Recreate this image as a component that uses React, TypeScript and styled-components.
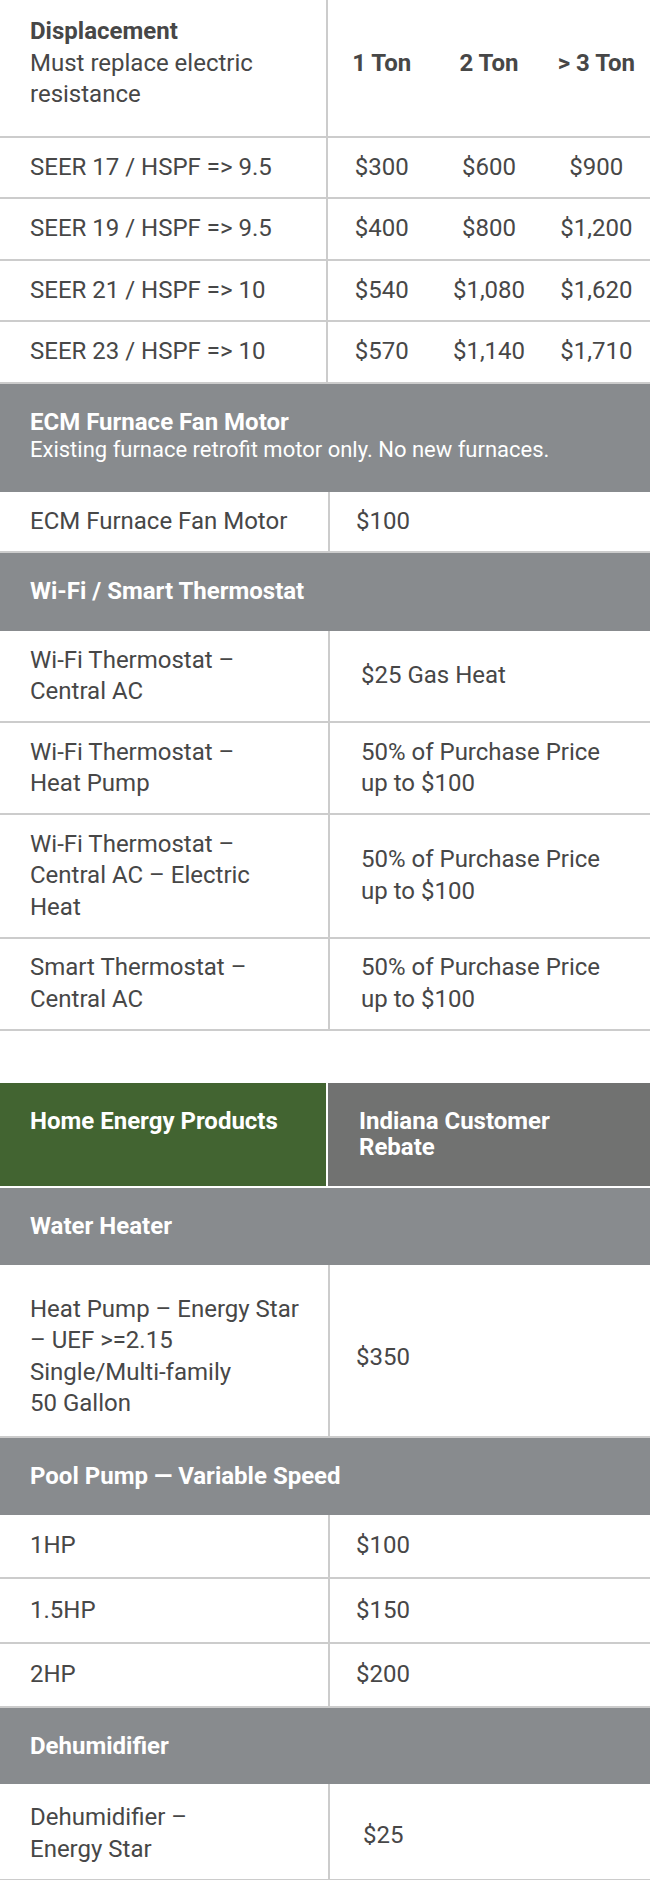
import styled, { createGlobalStyle } from "styled-components";

const GlobalStyle = createGlobalStyle`
  html, body {
    margin: 0;
    padding: 0;
    background: #ffffff;
  }
  body {
    font-family: Roboto, "Liberation Sans", Arial, sans-serif;
    color: #474747;
    -webkit-font-smoothing: antialiased;
  }
`;

const Page = styled.div`
  width: 650px;
  display: flex;
  flex-direction: column;
`;

const Table = styled.div<{ $top?: number }>`
  display: flex;
  flex-direction: column;
  margin-top: ${({ $top }) => $top ?? 0}px;
`;

const Row = styled.div<{ $cols: string }>`
  display: grid;
  grid-template-columns: ${({ $cols }) => $cols};
  border-bottom: 2px solid #cccccc;
`;

// a cell: first column carries the divider line
const Cell = styled.div<{
  $divider?: boolean;
  $center?: boolean;
  $bold?: boolean;
  $pt?: number;
  $pb?: number;
  $pl?: number;
}>`
  display: flex;
  flex-direction: column;
  justify-content: center;
  box-sizing: border-box;
  padding-top: ${({ $pt }) => $pt ?? 14}px;
  padding-bottom: ${({ $pb }) => $pb ?? 14}px;
  padding-left: ${({ $pl, $center }) => ($center ? 0 : $pl ?? 30)}px;
  padding-right: ${({ $center }) => ($center ? 0 : 12)}px;
  border-right: ${({ $divider }) => ($divider ? "2px solid #cccccc" : "none")};
  text-align: ${({ $center }) => ($center ? "center" : "left")};
  white-space: nowrap;
  font-size: 24px;
  line-height: 31.5px;
  font-weight: ${({ $bold }) => ($bold ? 700 : 400)};
`;

const Strong = styled.span`
  font-weight: 700;
`;

const Band = styled.div<{ $pb?: number }>`
  background: #888b8e;
  color: #ffffff;
  padding: 24px 30px ${({ $pb }) => $pb ?? 25}px;
  display: flex;
  flex-direction: column;
`;

const BandTitle = styled.div`
  font-size: 24px;
  line-height: 28px;
  font-weight: 700;
`;

const BandNote = styled.div`
  font-size: 22px;
  line-height: 28px;
  font-weight: 400;
`;

const HeadRow = styled.div`
  display: grid;
  grid-template-columns: 326px 1fr;
  column-gap: 2px;
  border-bottom: 2px solid #ffffff;
`;

const HeadCell = styled.div<{ $bg: string; $pl: number }>`
  background: ${({ $bg }) => $bg};
  color: #ffffff;
  font-size: 24px;
  line-height: 26px;
  font-weight: 700;
  padding: 25px 30px 26px ${({ $pl }) => $pl}px;
`;

const TOP_COLS = "328px 1fr 1fr 1fr";
const TWO_COLS = "330px 1fr";

const seer = [
  { label: "SEER 17 / HSPF => 9.5", v: ["$300", "$600", "$900"] },
  { label: "SEER 19 / HSPF => 9.5", v: ["$400", "$800", "$1,200"] },
  { label: "SEER 21 / HSPF => 10", v: ["$540", "$1,080", "$1,620"] },
  { label: "SEER 23 / HSPF => 10", v: ["$570", "$1,140", "$1,710"] },
];

const thermostats = [
  { label: ["Wi-Fi Thermostat –", "Central AC"], value: ["$25 Gas Heat"] },
  { label: ["Wi-Fi Thermostat –", "Heat Pump"], value: ["50% of Purchase Price", "up to $100"] },
  {
    label: ["Wi-Fi Thermostat –", "Central AC – Electric", "Heat"],
    value: ["50% of Purchase Price", "up to $100"],
  },
  { label: ["Smart Thermostat –", "Central AC"], value: ["50% of Purchase Price", "up to $100"] },
];

const pumps = [
  { label: "1HP", value: "$100" },
  { label: "1.5HP", value: "$150" },
  { label: "2HP", value: "$200" },
];

function Lines({ items }: { items: string[] }) {
  return (
    <>
      {items.map((t) => (
        <div key={t}>{t}</div>
      ))}
    </>
  );
}

export default function App() {
  return (
    <Page>
      <GlobalStyle />

      <Table>
        <Row $cols={TOP_COLS}>
          <Cell $divider $pt={16} $pb={25}>
            <Strong>Displacement</Strong>
            <div>Must replace electric</div>
            <div>resistance</div>
          </Cell>
          <Cell $center $bold $pt={16} $pb={25}>1 Ton</Cell>
          <Cell $center $bold $pt={16} $pb={25}>2 Ton</Cell>
          <Cell $center $bold $pt={16} $pb={25}>&gt; 3 Ton</Cell>
        </Row>
        {seer.map((r) => (
          <Row key={r.label} $cols={TOP_COLS}>
            <Cell $divider>{r.label}</Cell>
            {r.v.map((v) => (
              <Cell key={v} $center>
                {v}
              </Cell>
            ))}
          </Row>
        ))}
      </Table>

      <Table>
        <Band $pb={28}>
          <BandTitle>ECM Furnace Fan Motor</BandTitle>
          <BandNote>Existing furnace retrofit motor only. No new furnaces.</BandNote>
        </Band>
        <Row $cols={TWO_COLS}>
          <Cell $divider>ECM Furnace Fan Motor</Cell>
          <Cell $pl={26}>$100</Cell>
        </Row>
        <Band $pb={26}>
          <BandTitle>Wi-Fi / Smart Thermostat</BandTitle>
        </Band>
        {thermostats.map((r, i) => (
          <Row key={i} $cols={TWO_COLS}>
            <Cell $divider $pt={13.5} $pb={13.5}>
              <Lines items={r.label} />
            </Cell>
            <Cell $pl={31} $pt={13.5} $pb={13.5}>
              <Lines items={r.value} />
            </Cell>
          </Row>
        ))}
      </Table>

      <Table $top={52}>
        <HeadRow>
          <HeadCell $bg="#426431" $pl={30}>
            Home Energy Products
          </HeadCell>
          <HeadCell $bg="#717271" $pl={31}>
            Indiana Customer
            <br />
            Rebate
          </HeadCell>
        </HeadRow>
        <Band>
          <BandTitle>Water Heater</BandTitle>
        </Band>
        <Row $cols={TWO_COLS}>
          <Cell $divider $pt={29} $pb={16}>
            <Lines items={["Heat Pump – Energy Star", "– UEF >=2.15", "Single/Multi-family", "50 Gallon"]} />
          </Cell>
          <Cell $pl={26} $pt={30} $pb={14}>
            $350
          </Cell>
        </Row>
        <Band>
          <BandTitle>Pool Pump — Variable Speed</BandTitle>
        </Band>
        {pumps.map((p) => (
          <Row key={p.label} $cols={TWO_COLS}>
            <Cell $divider $pt={15.5} $pb={15.5}>
              {p.label}
            </Cell>
            <Cell $pl={26} $pt={15.5} $pb={15.5}>
              {p.value}
            </Cell>
          </Row>
        ))}
        <Band $pb={24}>
          <BandTitle>Dehumidifier</BandTitle>
        </Band>
        <Row $cols={TWO_COLS}>
          <Cell $divider $pt={18} $pb={14}>
            <Lines items={["Dehumidifier –", "Energy Star"]} />
          </Cell>
          <Cell $pl={33} $pt={22} $pb={14}>
            $25
          </Cell>
        </Row>
      </Table>
    </Page>
  );
}
